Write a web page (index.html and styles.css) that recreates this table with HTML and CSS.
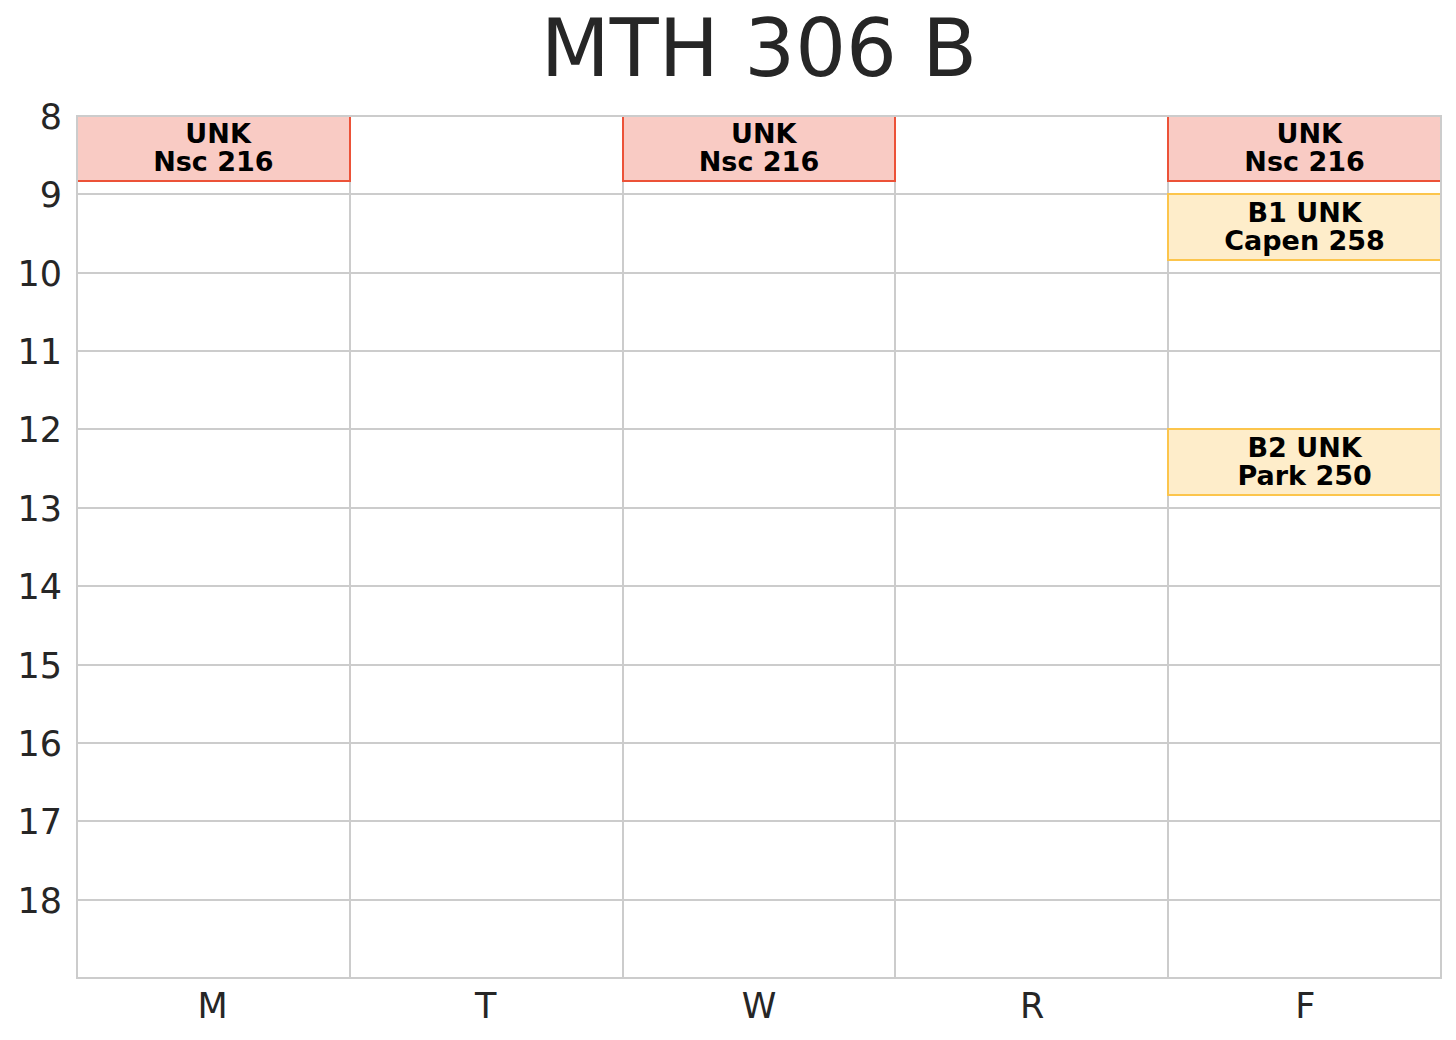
FILE: index.html
```html
<!DOCTYPE html>
<html lang="en">
<head>
<meta charset="utf-8">
<title>MTH 306 B</title>
<link rel="stylesheet" href="styles.css">
</head>
<body>
<div class="figure">
  <h1 class="title">MTH 306 B</h1>
  <div class="yaxis">
    <div class="tick"><span>8</span></div>
    <div class="tick"><span>9</span></div>
    <div class="tick"><span>10</span></div>
    <div class="tick"><span>11</span></div>
    <div class="tick"><span>12</span></div>
    <div class="tick"><span>13</span></div>
    <div class="tick"><span>14</span></div>
    <div class="tick"><span>15</span></div>
    <div class="tick"><span>16</span></div>
    <div class="tick"><span>17</span></div>
    <div class="tick"><span>18</span></div>
  </div>
  <div class="plot">
    <div class="gridlines">
      <div></div><div></div><div></div><div></div><div></div>
      <div></div><div></div><div></div><div></div><div></div>
      <div></div><div></div><div></div><div></div><div></div>
      <div></div><div></div><div></div><div></div><div></div>
      <div></div><div></div><div></div><div></div><div></div>
      <div></div><div></div><div></div><div></div><div></div>
      <div></div><div></div><div></div><div></div><div></div>
      <div></div><div></div><div></div><div></div><div></div>
      <div></div><div></div><div></div><div></div><div></div>
      <div></div><div></div><div></div><div></div><div></div>
      <div></div><div></div><div></div><div></div><div></div>
    </div>
    <div class="events">
      <div class="event lecture" style="grid-column: 1; grid-row: 1 / 6;"><span>&nbsp;UNK</span><span>Nsc 216</span></div>
      <div class="event lecture" style="grid-column: 3; grid-row: 1 / 6;"><span>&nbsp;UNK</span><span>Nsc 216</span></div>
      <div class="event lecture" style="grid-column: 5; grid-row: 1 / 6;"><span>&nbsp;UNK</span><span>Nsc 216</span></div>
      <div class="event recitation" style="grid-column: 5; grid-row: 7 / 12;"><span>B1 UNK</span><span>Capen 258</span></div>
      <div class="event recitation" style="grid-column: 5; grid-row: 25 / 30;"><span>B2 UNK</span><span>Park 250</span></div>
    </div>
    <div class="frame"></div>
  </div>
  <div class="xaxis">
    <span>M</span><span>T</span><span>W</span><span>R</span><span>F</span>
  </div>
</div>
</body>
</html>
```

FILE: styles.css
```css
html, body {
  margin: 0;
  padding: 0;
  background: #ffffff;
}

body {
  font-family: "DejaVu Sans", "Liberation Sans", sans-serif;
  color: #262626;
}

.figure {
  display: grid;
  grid-template-columns: 76px 1366px;
  grid-template-rows: 115px 864px auto;
}

.title {
  grid-column: 2;
  grid-row: 1;
  margin: 0;
  padding-top: 9px;
  font-size: 80px;
  line-height: 80px;
  font-weight: normal;
  text-align: center;
  white-space: nowrap;
}

.yaxis {
  grid-column: 1;
  grid-row: 2;
  display: flex;
  flex-direction: column;
  padding-top: 2px;
}

.tick {
  height: 78.36px;
  flex: none;
}

.tick span {
  display: block;
  line-height: 0;
  font-size: 35px;
  text-align: right;
  padding-right: 14px;
}

.plot {
  grid-column: 2;
  grid-row: 2;
  display: grid;
  grid-template-columns: 1fr;
  grid-template-rows: 1fr;
}

.gridlines {
  grid-area: 1 / 1;
  margin: 2px;
  display: grid;
  grid-template-columns: repeat(5, 1fr);
  grid-template-rows: repeat(11, 1fr);
  gap: 2px;
  background: #cccccc;
}

.gridlines div {
  background: #ffffff;
}

.events {
  grid-area: 1 / 1;
  margin: 1px;
  display: grid;
  grid-template-columns: repeat(5, 1fr);
  grid-template-rows: repeat(66, 1fr);
}

.event {
  margin: -1px;
  border: 2px solid;
  box-sizing: border-box;
  display: flex;
  flex-direction: column;
  align-items: center;
  justify-content: center;
  padding-bottom: 1px;
  font-size: 27px;
  line-height: 28px;
  font-weight: bold;
  color: #000000;
  white-space: pre;
  text-align: center;
}

.lecture {
  background: #f9cbc4;
  border-color: #ec5238;
}

.recitation {
  background: #feedca;
  border-color: #fcc54c;
}

.frame {
  grid-area: 1 / 1;
  border: 2px solid #cccccc;
}

.xaxis {
  grid-column: 2;
  grid-row: 3;
  display: grid;
  grid-template-columns: repeat(5, 1fr);
  margin-top: 10px;
  font-size: 35px;
  line-height: 35px;
  text-align: center;
}
```
